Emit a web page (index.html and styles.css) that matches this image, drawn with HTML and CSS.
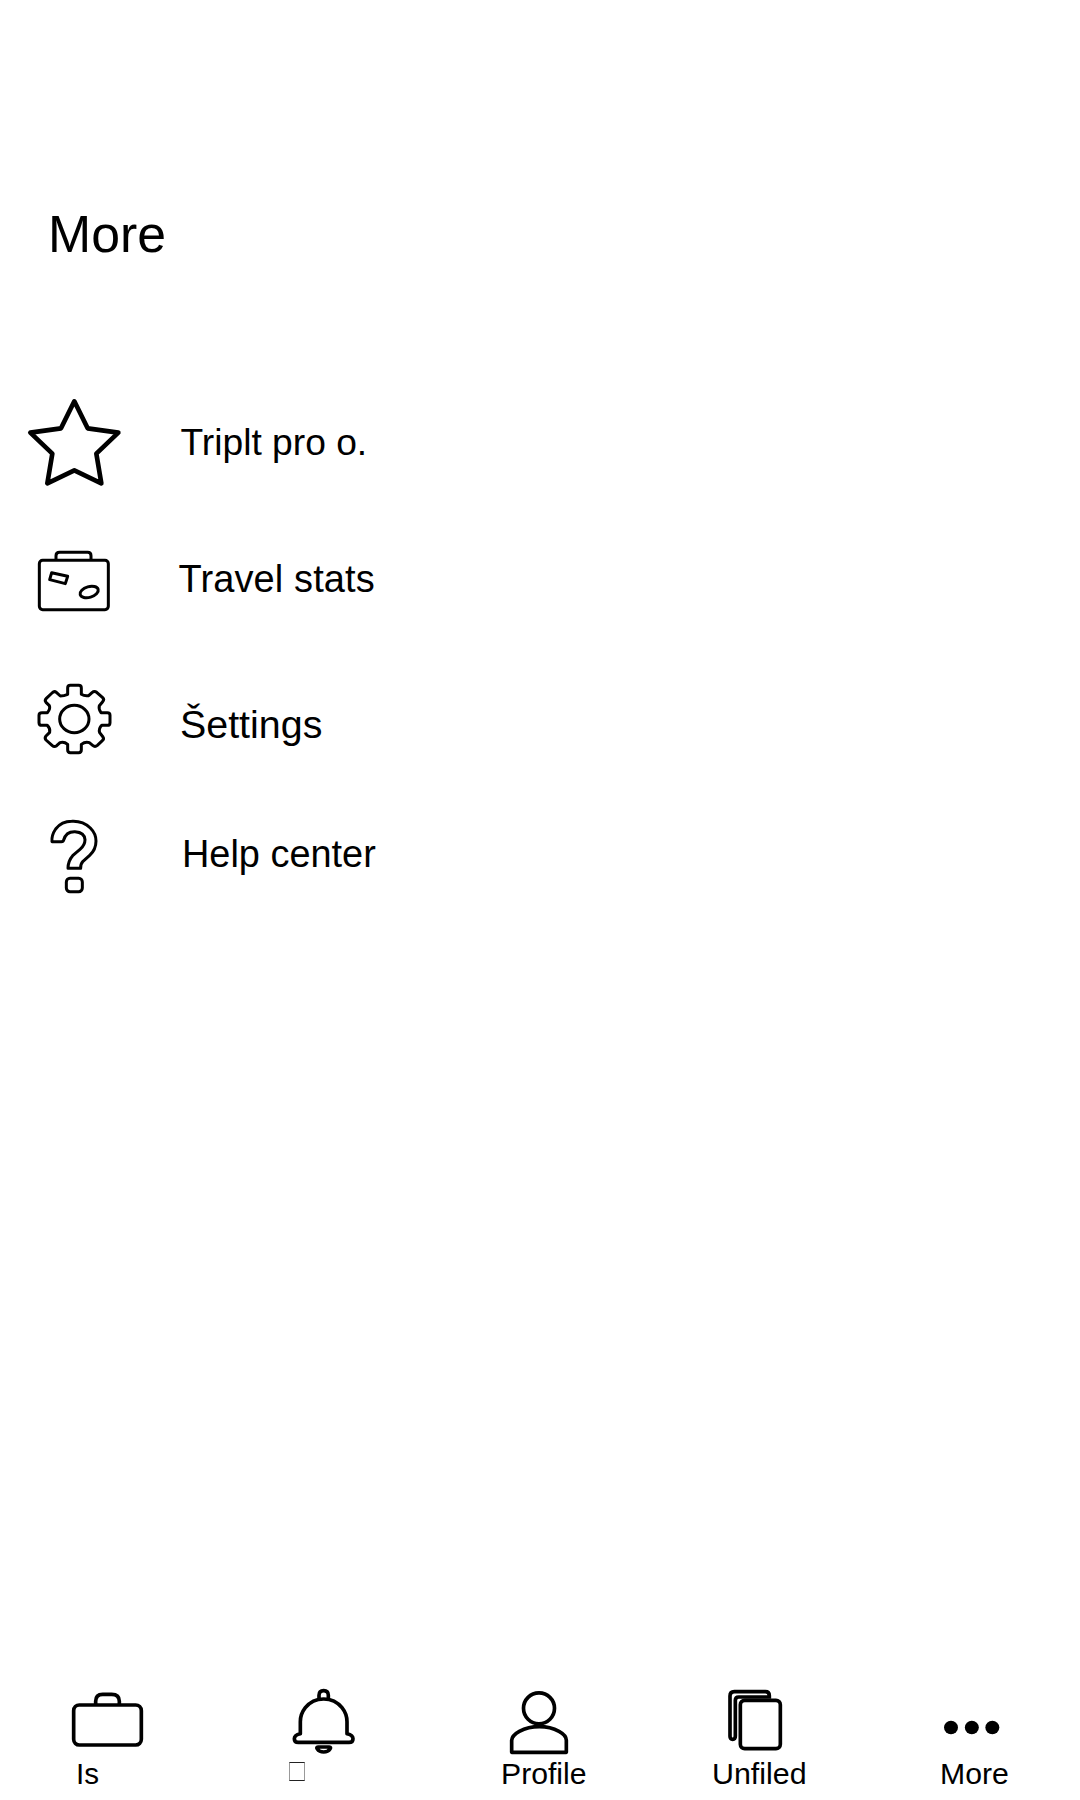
FILE: index.html
```html
<!DOCTYPE html>
<html lang="en">
<head>
<meta charset="utf-8">
<title>More</title>
<link rel="stylesheet" href="styles.css">
</head>
<body>
<main class="screen">
  <h1 class="title">More</h1>
  <ul class="menu">
    <li class="row row-pro">
      <svg class="icon" viewBox="0 0 330 330"><path stroke-width="14" d="M163 34 203 115 295 128 229 191 244 280 163 241 82 280 97 191 31 128 123 115Z"/></svg>
      <span class="label">Triplt pro o.</span>
    </li>
    <li class="row row-stats">
      <svg class="icon" viewBox="0 0 330 300"><rect x="58" y="91" width="207" height="148" rx="10"/><path d="M108 90V77Q108 67 119 67H203Q213 67 213 77V90M95 128 143 139 136 161 89 149Z"/><ellipse cx="207.500" cy="186" rx="28" ry="16" transform="rotate(-16 207.500 186)"/></svg>
      <span class="label">Travel stats</span>
    </li>
    <li class="row row-settings">
      <svg class="icon" viewBox="0 0 330 300"><path d="M143 73V54Q143 46 151 46H176Q184 46 184 54V73Q194 79 206 77L216 68Q223 62 230 67L248 83Q254 89 248 95L238 107Q235 117 243 128H262Q270 128 270 136V158Q270 166 262 166H245Q235 176 239 188L249 201Q253 207 247 212L232 226Q225 232 218 226L208 218Q196 214 184 223V240Q184 248 176 248H151Q143 248 143 240V223Q132 214 120 218L110 227Q103 232 97 227L78 210Q73 204 78 198L89 187Q92 176 82 166H66Q57 166 57 158V136Q57 128 66 128H82Q92 117 88 107L78 97Q73 91 79 85L96 69Q103 62 109 67L121 78Q132 78 143 73Z"/><ellipse cx="163" cy="147" rx="44" ry="41"/></svg>
      <span class="label">Šettings</span>
    </li>
    <li class="row row-help">
      <svg class="icon" viewBox="0 0 330 300"><path d="M96 95Q94 76 107 57Q125 34 155 34Q188 32 211 54Q228 71 228 93Q228 119 209 136L189 154Q181 163 182 175H144Q144 153 158 137Q168 128 180 118Q195 105 195 89Q194 67 165 65Q138 64 131 90Q130 95 124 95Z"/><rect x="139" y="205" width="48" height="40" rx="11"/></svg>
      <span class="label">Help center</span>
    </li>
  </ul>
  <nav class="tabs">
    <div class="tab tab-trips">
      <svg class="tab-icon" viewBox="0 0 360 255"><rect x="71" y="105" width="203" height="120" rx="17"/><path d="M137 103V94Q137 73 158 73H185Q208 73 208 94V103"/></svg>
      <span class="tab-label">Is</span>
    </div>
    <div class="tab tab-alerts">
      <svg class="tab-icon" viewBox="0 0 360 255"><path d="M147 87V76Q147 62 161 62Q175 62 175 76V87M161 87Q195 87 216 113Q231 132 231 155V191Q249 195 249 206Q249 217 237 217H85Q73 217 73 206Q73 195 91 191V155Q91 132 106 113Q127 87 161 87ZM144 231H178Q184 231 180 237Q174 246 161 246Q148 246 142 237Q138 231 144 231Z"/></svg>
      <span class="missing" aria-hidden="true"></span>
    </div>
    <div class="tab tab-profile">
      <svg class="tab-icon" viewBox="0 0 360 255"><circle cx="177" cy="115" r="46.500"/><path d="M95 247V211Q96 196 118 184Q145 170 178 170Q211 170 237 184Q259 196 259 211V247Z"/></svg>
      <span class="tab-label">Profile</span>
    </div>
    <div class="tab tab-unfiled">
      <svg class="tab-icon" viewBox="0 0 360 255"><rect x="121" y="91" width="120" height="145" rx="13"/><path d="M208 86V77Q208 65 196 65H103Q90 65 90 78V199Q90 208 98 208Q106 208 106 198V91Q106 81 116 81H205"/></svg>
      <span class="tab-label">Unfiled</span>
    </div>
    <div class="tab tab-more">
      <svg class="tab-icon dots" viewBox="0 0 360 255"><ellipse cx="93" cy="172.500" rx="21" ry="20"/><ellipse cx="155.500" cy="172.500" rx="21" ry="20"/><ellipse cx="217" cy="172.500" rx="21" ry="20"/></svg>
      <span class="tab-label">More</span>
    </div>
  </nav>
</main>
</body>
</html>
```
FILE: styles.css
```css
body {
  margin: 0;
  background: #fff;
  color: #000;
  font-family: "Liberation Sans", Arial, sans-serif;
}
.screen {
  display: flex;
  flex-direction: column;
  box-sizing: border-box;
  height: 1800px;
  padding-top: 204px;
}
.title {
  margin: 0 0 126px;
  padding-left: 48px;
  font-size: 51.8px;
  font-weight: 400;
  line-height: 60px;
}
.menu {
  margin: 0;
  padding: 0 0 0 20px;
  list-style: none;
}
.row {
  display: flex;
  align-items: flex-start;
  margin-bottom: 40px;
}
.icon,
.tab-icon {
  display: block;
  flex: none;
  fill: none;
  stroke: #000;
  stroke-linejoin: round;
}
.icon {
  width: 110px;
  height: 100px;
  stroke-width: 9;
}
.label {
  line-height: 40px;
  white-space: nowrap;
}
.row-pro { margin-bottom: 30px; }
.row-pro .icon { height: 110px; }
.row-pro .label { padding: 32px 0 0 50.5px; font-size: 37.2px; }
.row-stats .label { padding: 29px 0 0 48.5px; font-size: 38px; letter-spacing: 0.12px; }
.row-settings .label { padding: 34px 0 0 50px; font-size: 39.4px; }
.row-help .label { padding: 24px 0 0 52px; font-size: 37.9px; }
.tabs {
  display: grid;
  grid-template-columns: 220px 210px 220px 220px 120px;
  height: 130px;
  margin-top: auto;
  padding-left: 50px;
}
.tab {
  display: flex;
  flex-direction: column;
}
.tab-icon {
  width: 120px;
  height: 85px;
  stroke-width: 11;
}
.dots {
  fill: #000;
  stroke: none;
}
.tab-label {
  margin-top: -1px;
  font-size: 30.2px;
  line-height: 40px;
}
.tab-trips .tab-label { padding-left: 26px; font-size: 29.6px; }
.tab-profile .tab-label { padding-left: 21px; }
.tab-unfiled .tab-label { margin-top: -2px; padding-left: 12px; font-size: 30.4px; }
.tab-more .tab-label { padding-left: 20px; }
.missing {
  box-sizing: border-box;
  width: 16px;
  height: 19px;
  margin: 7px 0 0 19px;
  border: 1px solid #999;
  border-top-color: #222;
  border-bottom-color: #222;
}
```
